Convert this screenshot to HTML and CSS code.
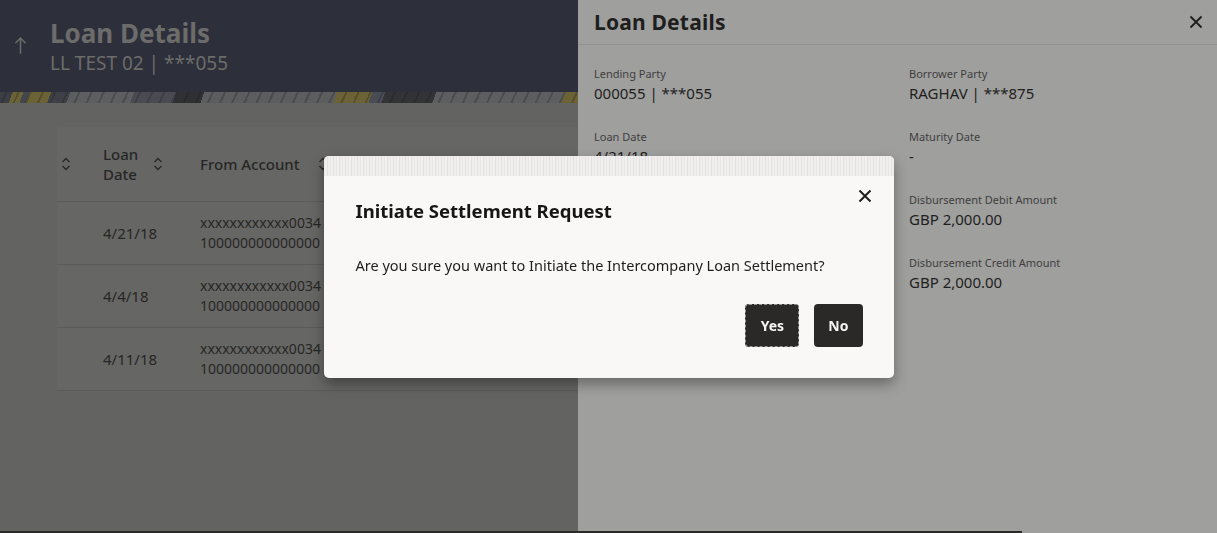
FILE: index.html
```html
<!DOCTYPE html>
<html lang="en">
<head>
<meta charset="utf-8">
<title>Loan Details</title>
<link rel="stylesheet" href="styles.css">
</head>
<body>
<div class="page">
  <div class="main">
    <header class="hero">
      <svg class="back" viewBox="0 0 14 20"><path d="M7 19 V2 M1.5 7.5 L7 2 L12.5 7.5" fill="none" stroke="#6c6c6a" stroke-width="1.6"/></svg>
      <div class="hero-text">
        <h1 class="hero-title">Loan Details</h1>
        <div class="hero-sub">LL TEST 02 | ***055</div>
      </div>
    </header>
    <div class="strip"></div>
    <div class="content">
      <div class="table">
        <div class="row head">
          <div class="cell c0"><svg class="sort" viewBox="0 0 10 14"><path d="M1.5 5 L5 1.5 L8.5 5 M1.5 9 L5 12.5 L8.5 9" fill="none" stroke="#2a2a2a" stroke-width="1.4"/></svg></div>
          <div class="cell c1"><span class="hlabel">Loan<br>Date</span><svg class="sort" viewBox="0 0 10 14"><path d="M1.5 5 L5 1.5 L8.5 5 M1.5 9 L5 12.5 L8.5 9" fill="none" stroke="#2a2a2a" stroke-width="1.4"/></svg></div>
          <div class="cell c2"><span class="hlabel">From Account</span><svg class="sort" viewBox="0 0 10 14"><path d="M1.5 5 L5 1.5 L8.5 5 M1.5 9 L5 12.5 L8.5 9" fill="none" stroke="#2a2a2a" stroke-width="1.4"/></svg></div>
        </div>
        <div class="row">
          <div class="cell c0"></div>
          <div class="cell c1 date">4/21/18</div>
          <div class="cell c2 acct">xxxxxxxxxxxx0034<br>100000000000000</div>
        </div>
        <div class="row">
          <div class="cell c0"></div>
          <div class="cell c1 date">4/4/18</div>
          <div class="cell c2 acct">xxxxxxxxxxxx0034<br>100000000000000</div>
        </div>
        <div class="row">
          <div class="cell c0"></div>
          <div class="cell c1 date">4/11/18</div>
          <div class="cell c2 acct">xxxxxxxxxxxx0034<br>100000000000000</div>
        </div>
      </div>
    </div>
  </div>
  <aside class="panel">
    <div class="panel-head">
      <h2 class="panel-title">Loan Details</h2>
      <svg class="panel-close" viewBox="0 0 14 14"><path d="M1.5 1.5 L12.5 12.5 M12.5 1.5 L1.5 12.5" stroke="#1e1e1e" stroke-width="1.8" fill="none"/></svg>
    </div>
    <div class="fields">
      <div class="field"><div class="label">Lending Party</div><div class="value">000055 | ***055</div></div>
      <div class="field"><div class="label">Borrower Party</div><div class="value">RAGHAV | ***875</div></div>
      <div class="field"><div class="label">Loan Date</div><div class="value">4/21/18</div></div>
      <div class="field"><div class="label">Maturity Date</div><div class="value">-</div></div>
      <div class="field"></div>
      <div class="field"><div class="label">Disbursement Debit Amount</div><div class="value">GBP 2,000.00</div></div>
      <div class="field"></div>
      <div class="field"><div class="label">Disbursement Credit Amount</div><div class="value">GBP 2,000.00</div></div>
    </div>
  </aside>
</div>
<div class="bottom-line"></div>
<div class="modal-layer">
  <div class="modal">
    <div class="modal-top"></div>
    <div class="modal-body">
      <div class="modal-head">
        <h3 class="modal-title">Initiate Settlement Request</h3>
        <svg class="modal-close" viewBox="0 0 14 14"><path d="M1.5 1.5 L12.5 12.5 M12.5 1.5 L1.5 12.5" stroke="#1e1e1e" stroke-width="2" fill="none"/></svg>
      </div>
      <p class="modal-text">Are you sure you want to Initiate the Intercompany Loan Settlement?</p>
      <div class="actions">
        <button class="btn focus">Yes</button>
        <button class="btn">No</button>
      </div>
    </div>
  </div>
</div>
</body>
</html>
```

FILE: styles.css
```css
* { box-sizing: border-box; }
html, body { margin: 0; padding: 0; }
body {
  width: 1217px;
  height: 533px;
  overflow: hidden;
  font-family: "Noto Sans", "Open Sans", sans-serif;
  background: #636361;
  position: relative;
}
.page {
  display: flex;
  height: 533px;
}
.main {
  width: 578px;
  flex: none;
  display: flex;
  flex-direction: column;
  background: #636361;
  overflow: hidden;
}
.hero {
  height: 92px;
  background: #2d2f3a;
  display: flex;
  align-items: flex-start;
  padding: 18px 0 0 14px;
}
.back {
  width: 13px;
  height: 19px;
  margin-top: 18px;
  margin-right: 23px;
  flex: none;
}
.hero-title {
  margin: 0;
  font-size: 26px;
  font-weight: 700;
  line-height: 30px;
  color: #6c6c6a;
}
.hero-sub {
  color: #6c6c6a;
  font-size: 19px;
  line-height: 30px;
}
.strip {
  height: 11px;
  background:
    repeating-linear-gradient(115deg, rgba(0,0,0,0) 0 5px, rgba(25,25,25,0.25) 5px 7px, rgba(0,0,0,0) 7px 11px),
    linear-gradient(110deg, #3c3e46 0 12px, #6b6236 12px 22px, #44464d 22px 28px, #6b6236 28px 48px, #3e4048 48px 66px, #5d5e60 66px 126px, #4a4b52 126px 166px, #2f3033 166px 192px, #5c5d5e 192px 317px, #6b6236 317px 350px, #4a4c55 350px 362px, #323336 362px 410px, #5d5e5f 410px 531px, #6b6236 531px 553px, #4b4d55 553px 557px, #34353a 557px 578px);
}
.content {
  flex: 1;
  padding: 24px 0 0 57px;
}
.table {
  background: #666664;
  width: 600px;
}
.row {
  display: flex;
  height: 63px;
  border-bottom: 1px solid #5b5b59;
  align-items: center;
}
.row.head { height: 75px; }
.cell { display: flex; align-items: center; }
.c0 { width: 46px; padding-left: 4px; }
.c1 { width: 97px; }
.c2 { flex: 1; }
.sort { width: 10px; height: 14px; flex: none; }
.hlabel {
  font-size: 15px;
  font-weight: 500;
  color: #262626;
  line-height: 20px;
}
.c1 .hlabel { width: 50px; }
.c2 .hlabel { width: 118px; }
.date { font-size: 15px; color: #262626; }
.acct { font-size: 14px; color: #262626; line-height: 20px; display: block; white-space: nowrap; }
.panel {
  flex: 1;
  background: #9f9f9d;
}
.panel-head {
  height: 45px;
  border-bottom: 1px solid #939391;
  display: flex;
  align-items: center;
  justify-content: space-between;
  padding: 0 14px 1px 16px;
}
.panel-title {
  margin: 0;
  font-size: 21px;
  font-weight: 700;
  color: #1e1e1e;
  letter-spacing: 0.2px;
}
.panel-close { width: 14px; height: 14px; }
.fields {
  display: grid;
  grid-template-columns: 315px 1fr;
  padding: 22px 0 0 16px;
  row-gap: 21px;
}
.field { height: 42px; }
.label {
  font-size: 11px;
  color: #3e3e3e;
  line-height: 14px;
}
.value {
  font-size: 15px;
  color: #1e1e1e;
  line-height: 24px;
}
.bottom-line {
  position: absolute;
  left: 0;
  bottom: 0;
  width: 1022px;
  height: 2px;
  background: #2a2a2a;
}
.modal-layer {
  position: fixed;
  inset: 0;
  display: flex;
  align-items: center;
  justify-content: center;
}
.modal {
  width: 570px;
  height: 222px;
  background: #f9f8f6;
  border-radius: 5px;
  overflow: hidden;
  box-shadow: 0 6px 14px rgba(0,0,0,0.35);
  display: flex;
  flex-direction: column;
}
.modal-top {
  height: 20px;
  background:
    repeating-linear-gradient(90deg, #e8e7e5 0 1px, #f1f0ee 1px 3px, #e3e2e0 3px 4px, #efeeec 4px 6px);
}
.modal-body {
  padding: 13px 22px 0 32px;
}
.modal-head {
  display: flex;
  justify-content: space-between;
  align-items: flex-start;
}
.modal-title {
  margin: 10px 0 0;
  font-size: 18.5px;
  font-weight: 700;
  color: #161616;
  line-height: 24px;
}
.modal-close { width: 14px; height: 14px; margin: 0; }
.modal-text {
  margin: 32px 0 0;
  font-size: 14.5px;
  color: #1e1e1e;
  line-height: 20px;
}
.actions {
  display: flex;
  justify-content: flex-end;
  gap: 15px;
  margin-top: 29px;
  padding-right: 9px;
}
.btn {
  height: 43px;
  min-width: 48px;
  padding: 0 14px;
  background: #2a2927;
  color: #f4f4f4;
  border: none;
  border-radius: 4px;
  font-family: "Noto Sans", sans-serif;
  font-size: 14px;
  font-weight: 700;
}
.btn.focus {
  width: 54px;
  outline: 1px dashed #9a9a98;
  outline-offset: -1px;
}
```
